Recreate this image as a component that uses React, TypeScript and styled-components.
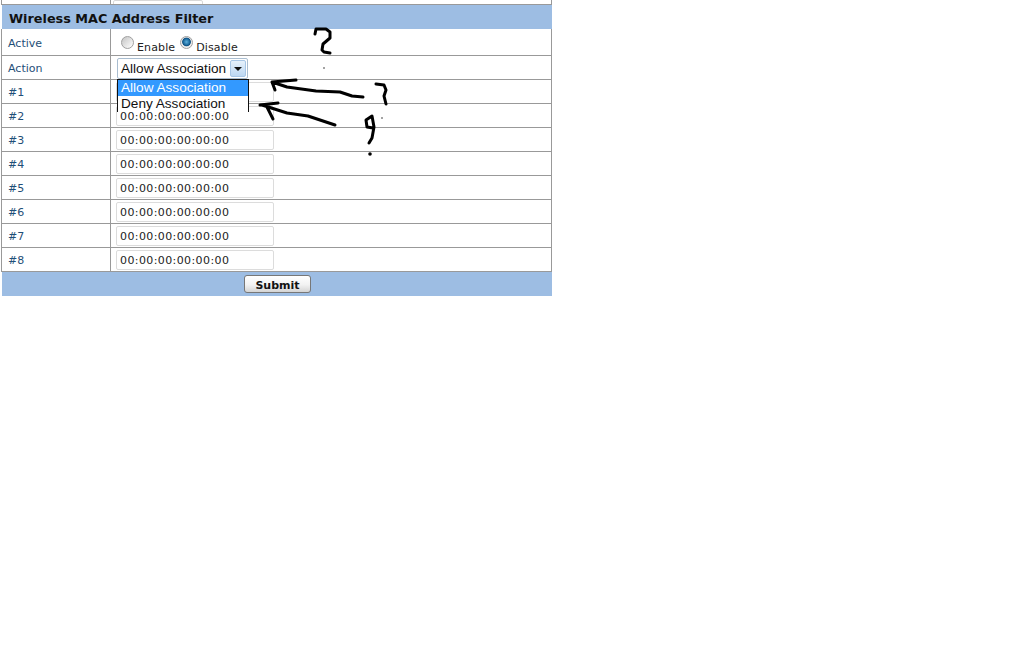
import React from 'react'
import styled, { createGlobalStyle } from 'styled-components'

const GlobalStyle = createGlobalStyle`
  html, body {
    margin: 0;
    padding: 0;
    background: #fff;
  }
`

const Page = styled.div`
  position: relative;
  width: 1016px;
  height: 650px;
  overflow: hidden;
  padding-left: 1px;
  box-sizing: border-box;
  font-family: "DejaVu Sans", Verdana, sans-serif;
`

const Panel = styled.div`
  width: 551px;
  display: flex;
  flex-direction: column;
`

const ClippedRow = styled.div`
  height: 4px;
  display: grid;
  grid-template-columns: 109px 1fr;
  border-left: 1px solid #999;
  border-right: 1px solid #999;
  border-bottom: 1px solid #999;
  overflow: hidden;
`

const ClippedCell = styled.div`
  border-right: 1px solid #999;
  &:last-child {
    border-right: none;
    padding-left: 2px;
    display: flex;
    align-items: flex-end;
  }
`

const ClippedButton = styled.div`
  width: 90px;
  height: 12px;
  flex-shrink: 0;
  box-sizing: border-box;
  background: #fff;
  border: 1px solid #d8d8d8;
  border-radius: 2px;
  position: relative;
`

const Descender = styled.span`
  position: absolute;
  left: 63px;
  bottom: 0;
  width: 3px;
  height: 3px;
  background: #222;
`

const BlueBar = styled.div`
  height: 24px;
  background: #9dbde3;
  margin-left: 1px;
  display: flex;
  align-items: center;
`

const Title = styled.h1`
  margin: 2px 0 0 7px;
  font-size: 12.8px;
  font-weight: bold;
  color: #111;
`

const FooterBar = styled(BlueBar)`
  justify-content: center;
`

const SubmitButton = styled.button`
  width: 67px;
  height: 18px;
  margin-left: 1px;
  padding: 2px 0 0;
  box-sizing: border-box;
  font-family: "DejaVu Sans", Verdana, sans-serif;
  font-size: 11px;
  font-weight: bold;
  color: #111;
  border: 1px solid #777;
  border-radius: 3px;
  background: linear-gradient(#fff 0%, #f2f2f2 55%, #d4d4d4 100%);
`

const Row = styled.div<{ $height: number }>`
  height: ${(p) => p.$height}px;
  box-sizing: border-box;
  display: grid;
  grid-template-columns: 109px 1fr;
  border-left: 1px solid #999;
  border-right: 1px solid #999;
  border-bottom: 1px solid #999;
`

const Label = styled.div`
  display: flex;
  align-items: center;
  padding: 2px 0 0 6px;
  font-size: 11px;
  color: #1f4f78;
  border-right: 1px solid #999;
`

const Value = styled.div`
  display: flex;
  align-items: center;
  padding-left: 5px;
  position: relative;
`

const RadioGroup = styled.div`
  display: flex;
  align-self: flex-start;
  align-items: flex-start;
  font-size: 11px;
  letter-spacing: 0.12px;
  color: #222;
  padding-left: 5px;
`

const RadioLabel = styled.span`
  margin: 12px 5px 0 3px;
`

const Radio = styled.span<{ $checked?: boolean }>`
  width: 13px;
  height: 13px;
  margin-top: 7px;
  box-sizing: border-box;
  border-radius: 50%;
  border: 1px solid #a0a0a0;
  background: ${(p) =>
    p.$checked
      ? 'radial-gradient(circle at 50% 45%, #5fb0dc 0%, #1c6a9e 38%, #0d4f80 48%, #e8e8e8 58%, #fff 100%)'
      : 'linear-gradient(135deg, #c4c4c4, #f4f4f4 80%)'};
`

const Select = styled.div`
  width: 131px;
  height: 21px;
  margin: 2px 0 0 1px;
  box-sizing: border-box;
  border: 1px solid #a9bdd0;
  border-radius: 2px;
  display: flex;
  align-items: center;
  justify-content: space-between;
  padding: 1px 1px 1px 3px;
  background: #fff;
  font-family: "Liberation Sans", Arial, sans-serif;
  font-size: 13.6px;
  line-height: 19px;
  color: #111;
`

const SelectArrow = styled.span`
  width: 16px;
  height: 17px;
  box-sizing: border-box;
  border: 1px solid #a7c6e6;
  border-radius: 2px;
  background: linear-gradient(#e6f1fb, #bcd7f2);
  display: flex;
  align-items: center;
  justify-content: center;
  &::after {
    content: '';
    border-left: 4px solid transparent;
    border-right: 4px solid transparent;
    border-top: 4px solid #111;
  }
`

const Dropdown = styled.ul`
  position: absolute;
  left: 117px;
  top: 79px;
  width: 132px;
  height: 33px;
  margin: 0;
  padding: 0;
  box-sizing: border-box;
  list-style: none;
  background: #fff;
  border: 1px solid #111;
  font-family: "Liberation Sans", Arial, sans-serif;
  font-size: 13.6px;
  color: #111;
`

const Option = styled.li<{ $active?: boolean }>`
  height: 16px;
  line-height: 16px;
  padding-left: 3px;
  background: ${(p) => (p.$active ? '#3399ff' : '#fff')};
  color: ${(p) => (p.$active ? '#fff' : '#111')};
`

const MacInput = styled.input`
  width: 158px;
  height: 20px;
  box-sizing: border-box;
  padding: 2px 0 0 3px;
  border: 1px solid #dcdcdc;
  border-radius: 2px;
  font-family: "DejaVu Sans", Verdana, sans-serif;
  font-size: 11px;
  letter-spacing: 0.4px;
  color: #222;
  outline: none;
`

const Scribbles = styled.svg`
  position: absolute;
  left: 0;
  top: 0;
  pointer-events: none;
`

const macs = ['#1', '#2', '#3', '#4', '#5', '#6', '#7', '#8']

const App = () => {
  return (
    <Page>
      <GlobalStyle />
      <Panel>
        <ClippedRow>
          <ClippedCell />
          <ClippedCell>
            <ClippedButton>
              <Descender />
            </ClippedButton>
          </ClippedCell>
        </ClippedRow>
        <BlueBar>
          <Title>Wireless MAC Address Filter</Title>
        </BlueBar>
        <Row $height={27}>
          <Label>Active</Label>
          <Value>
            <RadioGroup>
              <Radio />
              <RadioLabel>Enable</RadioLabel>
              <Radio $checked />
              <RadioLabel>Disable</RadioLabel>
            </RadioGroup>
          </Value>
        </Row>
        <Row $height={24}>
          <Label>Action</Label>
          <Value>
            <Select>
              Allow Association
              <SelectArrow />
            </Select>
          </Value>
        </Row>
        {macs.map((m) => (
          <Row $height={24} key={m}>
            <Label>{m}</Label>
            <Value>
              <MacInput readOnly value="00:00:00:00:00:00" />
            </Value>
          </Row>
        ))}
        <FooterBar>
          <SubmitButton>Submit</SubmitButton>
        </FooterBar>
      </Panel>

      <Dropdown>
        <Option $active>Allow Association</Option>
        <Option>Deny Association</Option>
      </Dropdown>

      <Scribbles width="1016" height="650" fill="none" stroke="#000" strokeWidth="3" strokeLinecap="round" strokeLinejoin="round">
        <path d="M315 34 L316 29 L326 29 L330 32 L330 38 L323 44 L322 50 L324 52 L330 53" />
        <path d="M296 80 L272 82 L275 90 M272 82 L287 87 L316 91 L340 92 L352 96 L363 97" />
        <path d="M278 103 L260 105 M267 107 L273 119 M262 105 L287 113 L308 116 L335 125" />
        <path d="M376 84 L384 85 L386 90 L384 96 L386 104" />
        <path d="M373 128 L367 127 L366 120 L372 116 L374 127 L372 138 L369 143" />
        <circle cx="370" cy="154" r="1.8" fill="#000" stroke="none" />
        <circle cx="324" cy="68" r="0.7" fill="#000" stroke="none" />
        <circle cx="382" cy="118" r="0.7" fill="#000" stroke="none" />
      </Scribbles>
    </Page>
  )
}

export default App
